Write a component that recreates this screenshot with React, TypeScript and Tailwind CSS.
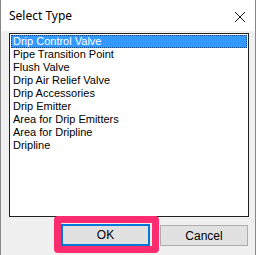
import React from "react";

const ITEMS = [
  "Drip Control Valve",
  "Pipe Transition Point",
  "Flush Valve",
  "Drip Air Relief Valve",
  "Drip Accessories",
  "Drip Emitter",
  "Area for Drip Emitters",
  "Area for Dripline",
  "Dripline",
];

export default function App() {
  return (
    <div className="relative w-[256px] h-[255px] border-x border-[#888888] bg-[#f0f0f0] flex flex-col font-['Liberation_Sans',Arial,sans-serif] text-black overflow-hidden">
      {/* title bar */}
      <div className="h-[31px] bg-white flex items-center justify-between pl-[8px] pr-[9px] shrink-0">
        <span className="text-[12px] font-['Noto_Sans',sans-serif] mt-[1px]">Select Type</span>
        <svg width="12" height="12" viewBox="0 0 12 12" className="mt-[2px]">
          <path d="M1 1 L11 11 M11 1 L1 11" stroke="#111" strokeWidth="1" />
        </svg>
      </div>

      {/* list */}
      <div className="mt-[2px] ml-[8px] mr-[6px] h-[184px] border border-[#1e1e1e] bg-white pt-[1px] px-[1px]">
        {ITEMS.map((item, i) => (
          <div
            key={item}
            className={
              i === 0
                ? "h-[13px] leading-[13px] text-[11px] pl-[2px] bg-[#3399ff] text-white outline outline-1 outline-dotted outline-[#0e4a8a] -outline-offset-1"
                : "h-[13px] leading-[13px] text-[11px] pl-[2px]"
            }
          >
            {item}
          </div>
        ))}
      </div>

      {/* buttons */}
      <div className="flex items-start mt-[7px] ml-[60px] gap-[10px] text-[12px]">
        <button className="w-[89px] h-[22px] border-2 border-[#0078d7] bg-[#e1e1e1] flex items-center justify-center">
          OK
        </button>
        <button className="w-[88px] h-[21px] mt-[1px] border border-[#adadad] bg-[#e1e1e1] flex items-center justify-center">
          Cancel
        </button>
      </div>

      {/* highlight annotation */}
      <div className="absolute left-[53px] top-[216px] w-[105px] h-[37px] rounded-[4px] border-[7px] border-[#ff2d6f] pointer-events-none" />
    </div>
  );
}
